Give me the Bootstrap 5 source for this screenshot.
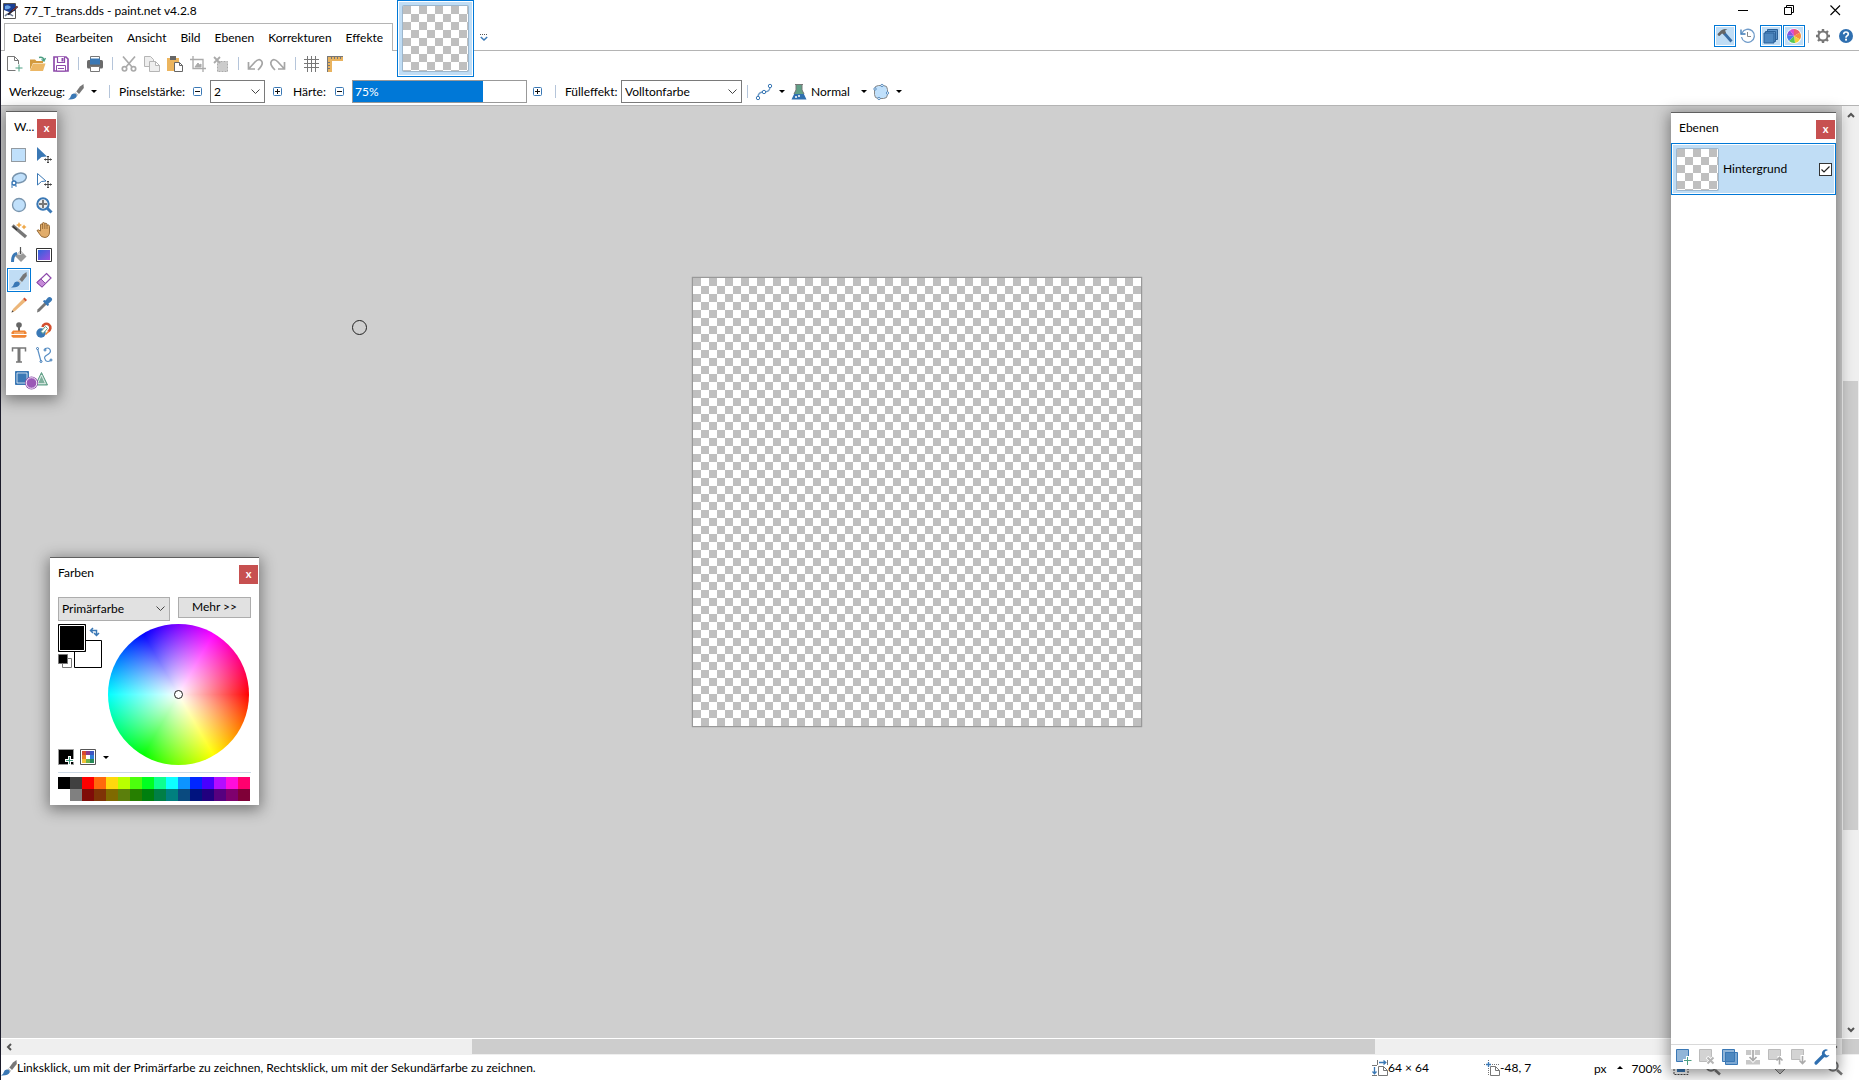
<!DOCTYPE html>
<html lang="de">
<head>
<meta charset="utf-8">
<meta name="viewport" content="width=device-width, initial-scale=1">
<title>77_T_trans.dds - paint.net v4.2.8</title>
<link href="https://cdn.jsdelivr.net/npm/bootstrap@5.3.0/dist/css/bootstrap.min.css" rel="stylesheet">
<style>
:root{--edge:#b4b4b4;--accent:#0078d7;--pick:#c0ddf5}
body{font:12px/16px Lato,"Open Sans",sans-serif;color:#000;background:#fff;border-left:1px solid #1b1b2a}
button,input,select{font:inherit;color:inherit}
svg{display:block;overflow:visible;flex:none}
.ico{width:16px;height:16px}
.plain{border:0;background:none;padding:0}
.gap-l6{margin-left:6px}
.gap-l7{margin-left:7px}
.gap-l11{margin-left:11px}
.titlerow{height:23px;padding:0 0 2px 2px;gap:5px}
.winbtns{gap:35px;padding-right:18px}
.winbtns svg{width:11px;height:11px}
.menurow{height:28px}
.menurow::before{content:"";width:3px;border-bottom:1px solid var(--edge)}
.menubox{border:1px solid var(--edge);border-bottom:0;padding:1px 8px 0;gap:14px;width:389px}
.menubox a{color:#000;text-decoration:none}
.menurest{border-bottom:1px solid var(--edge);padding-right:1px}
.docthumb{left:396px;top:0;width:77px;height:77px;border:1px solid var(--accent);background:var(--pick);box-shadow:inset 0 0 0 1px #fff;z-index:3}
.checker{background:repeating-conic-gradient(#fff 0 25%,#bfbfbf 0 50%) 0 0/16px 16px}
.docthumb .checker{width:65px;height:65px;box-shadow:0 0 0 1px #9db7cd;border-radius:1px}
.overflowbtn{left:479px;top:33px}
.aux{width:23px;height:23px}
.aux .face{width:22px;height:22px;margin-top:2px;border:1px solid transparent}
.aux.on .face{border-color:var(--accent);background:var(--pick);box-shadow:inset 0 0 0 1px #fff}
.toolrow{height:27px;padding:0 0 2px 3px}
.slot{width:23px;height:23px;padding-left:3px}
.sep{width:11px;height:13px}
.sep::before{content:"";display:block;margin-left:5px;width:1px;height:13px;background:#b5c5da}
.menurest .sep{width:6px;margin-top:7px}
.menurest .sep::before{margin-left:2px}
.optrow{height:28px;padding-left:8px;border-bottom:1px solid var(--edge)}
.step{width:9px;height:9px}
.box{border:1px solid #7a7a7a;height:23px;border-radius:0;appearance:none;padding:0 20px 0 3px;line-height:18px;background:#fff url("data:image/svg+xml,%3Csvg xmlns='http://www.w3.org/2000/svg' width='9' height='6'%3E%3Cpath d='M.5.5 4.500 4.500 8.500.5' fill='none' stroke='%23444'/%3E%3C/svg%3E") no-repeat right 4px center}
.w-lbl1{width:55px}.w-lbl2{width:67px}.w-lbl3{width:34px}.w-lbl4{width:56px}.w-num{width:55px}.w-fill{width:121px}.w-mode{width:50px}
.hard{width:175px;height:23px}
.hard input{width:100%;height:100%;appearance:none;margin:0;border:1px solid #999;background:linear-gradient(90deg,var(--accent) 75%,#fff 75%)}
.hard input::-webkit-slider-thumb{appearance:none;width:0}
.hard output{left:3px;top:4px;color:#fff;pointer-events:none}
.caret{width:0;height:0;border:3px solid transparent;border-top-color:#000;border-bottom:0}
.caret.up{border:3px solid transparent;border-bottom-color:#000;border-top:0}
.work{background:#cfcfcf;z-index:2}
.view{padding:171px 10px 0 0}
.sheet{width:450px;height:450px;border:1px solid #999;box-shadow:0 0 1px #888}
.bar{background:#efefef}
.bar .thumb{background:#cdcdcd}
.vbar{width:17px;padding-right:1px;border-left:1px solid #f5f5f5}
.hbar{height:17px;border-top:1px solid #fff;padding-bottom:1px}
.arrowbox{width:15px;height:17px}
.hbar .arrowbox{height:15px}
.corner{width:17px;background:#cdcdcd}
.status{height:25px}
.stright{right:0;top:0;height:25px;width:491px}
.stzoom{padding-top:2px}
.w-dim{width:96px}.w-pos{width:94px}.w-pct{width:38px}
.panel{background:#fff;border-top:1px solid #606060;box-shadow:0 3px 14px 2px rgba(0,0,0,.42);z-index:4}
.shut{width:19px;height:19px;background:#c75050;color:#fff;border:0;padding:0 0 2px;font-weight:700;font-size:11px;line-height:16px}
.p-tools{left:5px;top:5px;width:51px;height:284px}
.p-tools .head{padding:7px 1px 0 8px}
.toolgrid{display:grid;grid-template-columns:25px 25px;grid-auto-rows:25px;padding:5px 0 0 1px}
.toolgrid .plain{width:24px;height:24px;border:1px solid transparent}
.toolgrid .plain.on{border-color:var(--accent);background:var(--pick);box-shadow:inset 0 0 0 1px #fff}
.toolgrid .wide{grid-column:span 2;width:48px}
.p-colors{left:49px;top:451px;width:209px;height:248px}
.p-colors .head{padding:7px 1px 0 8px}
.p-colors .inner{padding:13px 8px 0}
.p-colors .sel{border-color:#adadad;background-color:#e1e1e1;width:112px;height:24px}
.more{width:73px;height:21px;border:1px solid #adadad;background:#e1e1e1;line-height:14px;padding:0 0 2px}
.wheel{width:141px;height:141px;flex:none;border-radius:50%;background:radial-gradient(closest-side,#fff,rgba(255,255,255,0)),conic-gradient(from 90deg,red,#ff0,#0f0,#0ff,#00f,#f0f,red)}
.wheelrow{padding:3px 2px 0 0;height:144px}
.swatches{width:50px}
.ruleline{height:1px;background:#ccd9e6;margin-top:7px}
.palette{display:grid;grid-template-columns:repeat(16,12px);grid-auto-rows:12px;margin-top:4px}
.p-layers{right:23px;top:6px;bottom:-31px;width:165px}
.p-layers .head{padding:7px 1px 0 8px;height:30px}
.layer{height:52px;border:1px solid var(--accent);background:var(--pick);box-shadow:inset 0 0 0 1px #fff;padding:0 3px 0 5px;gap:5px}
.layer .checker{width:41px;height:41px;box-shadow:0 0 0 1px #9db7cd;border-radius:1px}
.tick{appearance:none;width:13px;height:13px;border:1px solid #333;background:#fff url("data:image/svg+xml,%3Csvg xmlns='http://www.w3.org/2000/svg' width='11' height='11'%3E%3Cpath d='M1.500 5.500 4 8 9.500 2.500' fill='none' stroke='%23222' stroke-width='1.200'/%3E%3C/svg%3E")}
.layerbar{height:25px;border-top:1px solid #d9d9d9;padding:0 6px 0 5px}
.cursor{left:350px;top:213px}
</style>
<script src="https://cdn.jsdelivr.net/npm/bootstrap@5.3.0/dist/js/bootstrap.bundle.min.js"></script>
</head>
<body class="d-flex flex-column vh-100 overflow-hidden m-0">

<svg class="d-none">
<symbol id="brush" viewBox="0 0 16 16"><path d="M15.500 0 15.800 4 11 10 8.300 7.500 12 2.500Z" fill="#777"/><path d="M7.500 8.200 10.300 10.700 9.200 12 6.200 9.300Z" fill="#c4c4c4"/><path d="M5.800 9.500Q9 9.800 8.800 12.300 7 16 0 15.500 2.500 14.500 2.800 12 3.300 9.700 5.800 9.500Z" fill="#3a78b5"/></symbol>
<symbol id="minus" viewBox="0 0 9 9"><rect x=".5" y=".5" width="8" height="8" rx="1" fill="#fff" stroke="#3a78b5"/><path d="M2 4.500H7" stroke="#111"/></symbol>
<symbol id="plus" viewBox="0 0 9 9"><rect x=".5" y=".5" width="8" height="8" rx="1" fill="#fff" stroke="#3a78b5"/><path d="M2 4.500H7M4.500 2V7" stroke="#111"/></symbol>
<symbol id="lens" viewBox="0 0 16 16"><circle cx="6" cy="6" r="4.700" fill="#e8f2fb" stroke="#777" stroke-width="2"/><path d="M10 10 15 14.500" stroke="#777" stroke-width="2.600"/></symbol>
</svg>

<header class="position-relative">
  <div class="titlerow d-flex align-items-center">
    <svg class="ico" viewBox="0 0 16 16"><path d="M.5.500H12.500V15.500H.5Z" fill="#fff" stroke="#555"/><path d="M1 1H12V8L6 9 1 7Z" fill="#1b3f94"/><path d="M2 3Q5 1 8 4 6 7 2 6Z" fill="#69a3e6"/><path d="M2 13Q5 9 10 13" fill="none" stroke="#6a7a94" stroke-width="1.500"/><path d="M14.500 3.500 5 11.500" stroke="#2a2130" stroke-width="1.800"/><path d="M14.500 3.500 9.500 7.500" stroke="#b0443c"/></svg>
    <span>77_T_trans.dds - paint.net v4.2.8</span>
    <div class="winbtns d-flex ms-auto">
      <button class="plain" aria-label="Minimieren"><svg viewBox="0 0 11 11"><path d="M0 5.500H10" stroke="#000"/></svg></button>
      <button class="plain" aria-label="Verkleinern"><svg viewBox="0 0 11 11"><path d="M.5 2.500H7.500V9.500H.5ZM2.500 2.500V.5H9.500V7.500H7.500" fill="none" stroke="#000"/></svg></button>
      <button class="plain" aria-label="Schließen"><svg viewBox="0 0 11 11"><path d="M.5.500 10 10M10 .5.500 10" stroke="#000" stroke-width="1.100"/></svg></button>
    </div>
  </div>
  <div class="menurow d-flex">
    <nav class="menubox d-flex align-items-center">
      <a href="#">Datei</a><a href="#">Bearbeiten</a><a href="#">Ansicht</a><a href="#">Bild</a><a href="#">Ebenen</a><a href="#">Korrekturen</a><a href="#">Effekte</a>
    </nav>
    <div class="menurest flex-grow-1 d-flex justify-content-end align-items-start">
      <button class="plain aux on" aria-label="Werkzeuge"><span class="face d-flex align-items-center justify-content-center"><svg class="ico" viewBox="0 0 16 16"><path d="M7 5 14.500 13.500" stroke="#3a6ea5" stroke-width="2.800"/><path d="M1 7.500 0.500 6 4 2.500Q7 0 10.500 1.500L8 2.500 9 4.500 7 6.500 5 5.500 2.500 8Z" fill="#666"/></svg></span></button>
      <button class="plain aux" aria-label="Verlauf"><span class="face d-flex align-items-center justify-content-center"><svg class="ico" viewBox="0 0 16 16"><path d="M2 5A6.500 6.500 0 1 1 1.500 9" fill="none" stroke="#6f9bc9" stroke-width="1.300"/><path d="M1 1.500V6H5.500" fill="none" stroke="#3a78b5" stroke-width="1.300"/><path d="M7.500 4V8.500H11" fill="none" stroke="#888"/></svg></span></button>
      <button class="plain aux on" aria-label="Ebenen"><span class="face d-flex align-items-center justify-content-center"><svg class="ico" viewBox="0 0 16 16" fill="#5b93c9" stroke="#2b6199"><path d="M4.500 1.500H14.500V11.500H4.500Z"/><path d="M2.500 3.500H12.500V13.500H2.500Z"/><path d="M1 5H11V15H1Z" fill="#4e88c0"/></svg></span></button>
      <button class="plain aux on" aria-label="Farben"><span class="face d-flex align-items-center justify-content-center"><svg class="ico" viewBox="-8 -8 16 16"><circle r="7.800" fill="#fff"/><path d="M0 0V-7A7 7 0 0 1 6-3.500Z" fill="#ef5d6c"/><path d="M0 0 6-3.500A7 7 0 0 1 6 3.500Z" fill="#f5913d"/><path d="M0 0 6 3.500A7 7 0 0 1 1 7Z" fill="#f3d23c"/><path d="M0 0 1 7A7 7 0 0 1-5 5Z" fill="#55c956"/><path d="M0 0-5 5A7 7 0 0 1-7-1Z" fill="#4a7de8"/><path d="M0 0-7-1A7 7 0 0 1-4-5.700Z" fill="#8a54dd"/><path d="M0 0-4-5.700A7 7 0 0 1 0-7Z" fill="#e04ac8"/></svg></span></button>
      <span class="sep"></span>
      <button class="plain aux" aria-label="Einstellungen"><span class="face d-flex align-items-center justify-content-center"><svg class="ico" viewBox="-8 -8 16 16"><circle r="4.500" fill="none" stroke="#777" stroke-width="2"/><g stroke="#777" stroke-width="2.400"><path d="M0-4.500V-7M0 4.500V7M-4.500 0H-7M4.500 0H7M-3.500-3.500-5-5M3.500 3.500 5 5M3.500-3.500 5-5M-3.500 3.500-5 5"/></g></svg></span></button>
      <button class="plain aux" aria-label="Hilfe"><span class="face d-flex align-items-center justify-content-center"><svg class="ico" viewBox="0 0 16 16"><circle cx="8" cy="8" r="7" fill="#2f6fb0"/><path d="M5.700 6.200Q5.800 4 8 4T10.300 6Q10.300 7.300 8.900 8 8 8.500 8 9.700" fill="none" stroke="#fff" stroke-width="1.700"/><rect x="7.100" y="10.700" width="1.900" height="1.900" fill="#fff"/></svg></span></button>
    </div>
  </div>
  <button class="docthumb position-absolute d-flex align-items-center justify-content-center p-0" aria-label="77_T_trans.dds"><span class="checker"></span></button>
  <button class="plain overflowbtn position-absolute" aria-label="Bilderliste"><svg width="8" height="9" viewBox="0 0 8 9"><path d="M0 1.500H8" stroke="#555" stroke-dasharray="1 1"/><path d="M.8 4 4 7 7.200 4" fill="none" stroke="#3a78b5" stroke-width="1.500"/></svg></button>

  <div class="toolrow d-flex align-items-center">
    <button class="plain slot" aria-label="Neu"><svg class="ico" viewBox="0 0 16 16"><path d="M8.500 14.500H.5V.5H7.500L11.500 4.500V8M7.500.5V4.500H11.500" fill="none" stroke="#777"/><path d="M12 8.500V15.500M8.500 12H15.500" stroke="#4c9f83"/></svg></button>
    <button class="plain slot" aria-label="Öffnen"><svg class="ico" viewBox="0 0 16 16"><path d="M0 3.500H5L6.500 5H13V7H3L0 14Z" fill="#d39a3e"/><path d="M3 7.500H15.500L13 15H0Z" fill="#ecb765"/><path d="M9 1.500Q13 .5 14 4M11.500 3.500 14 5 15.500 2" fill="none" stroke="#4c9f83" stroke-width="1.300"/></svg></button>
    <button class="plain slot" aria-label="Speichern"><svg class="ico" viewBox="0 0 16 16"><path d="M1 1H13L15 3V15H1Z" fill="#fff" stroke="#8e4bab" stroke-width="1.700"/><path d="M4.500 1V6.500H11.500V1" fill="#fff" stroke="#8e4bab" stroke-width="1.200"/><path d="M8.500 2H10.500V5.500H8.500Z" fill="#8e4bab"/><path d="M3.500 9.500H12.500V15H3.500Z" fill="#fff" stroke="#8e4bab"/><path d="M5 12.500H11" stroke="#8e4bab"/></svg></button>
    <span class="sep"></span>
    <button class="plain slot" aria-label="Drucken"><svg class="ico" viewBox="0 0 16 16"><path d="M3.500.500H12.500V5H3.500Z" fill="#fff" stroke="#777"/><rect y="4" width="16" height="8.500" rx="1.500" fill="#6b6b6b"/><path d="M3 2.500H13V8.500H3Z" fill="#3a78b5"/><path d="M3.500 10.500H12.500V15.500H3.500Z" fill="#fff" stroke="#777"/></svg></button>
    <span class="sep"></span>
    <button class="plain slot" aria-label="Ausschneiden"><svg class="ico" viewBox="0 0 16 16" fill="none" stroke="#aaa" stroke-width="1.700"><path d="M2 .5 11 11M14 .5 5 11"/><circle cx="3.500" cy="12.800" r="2.200"/><circle cx="12.500" cy="12.800" r="2.200"/></svg></button>
    <button class="plain slot" aria-label="Kopieren"><svg class="ico" viewBox="0 0 16 16" fill="#eee" stroke="#b5b5b5"><path d="M.5.500H6.500L9.500 3.500V10.500H.5Z"/><path d="M5.500 5.500H11.500L15.500 9.500V15.500H5.500ZM11.500 5.500V9.500H15.500"/></svg></button>
    <button class="plain slot" aria-label="Einfügen"><svg class="ico" viewBox="0 0 16 16"><path d="M0 2H12V15H0Z" fill="#ecb55e"/><path d="M3 0H9V4H3Z" fill="#666"/><path d="M7.500 6.500H12.500L15.500 9.500V15.500H7.500ZM12.500 6.500V9.500H15.500" fill="#fff" stroke="#666"/></svg></button>
    <button class="plain slot" aria-label="Zuschneiden"><svg class="ico" viewBox="0 0 16 16" fill="none" stroke="#aaa"><path d="M3 0V12.500H16M0 3.500H13V16" stroke-width="1.300"/><path d="M5 11 8 7 9.500 9 11 8V11Z" fill="#aaa"/></svg></button>
    <button class="plain slot" aria-label="Auswahl aufheben"><svg class="ico" viewBox="0 0 16 16"><path d="M4.500 5.500H14.500V15.500H4.500Z" fill="#ccc" stroke="#aaa" stroke-dasharray="2 1"/><path d="M1 1 7 7M7 1 1 7" stroke="#aaa" stroke-width="1.800"/></svg></button>
    <span class="sep"></span>
    <button class="plain slot" aria-label="Rückgängig"><svg class="ico" viewBox="0 0 16 16" fill="none" stroke="#a5a5a5" stroke-width="1.700"><path d="M1.500 6V13H8M2 12.500 8 6Q12 2 14.500 5T11 14"/></svg></button>
    <button class="plain slot" aria-label="Wiederherstellen"><svg class="ico" viewBox="0 0 16 16" fill="none" stroke="#a5a5a5" stroke-width="1.700"><path d="M14.500 6V13H8M14 12.500 8 6Q4 2 1.500 5T5 14"/></svg></button>
    <span class="sep"></span>
    <button class="plain slot" aria-label="Gitter"><svg class="ico" viewBox="0 0 16 16" stroke="#777"><path d="M3.500 0V16M7.500 0V16M11.500 0V16M0 3.500H15M0 7.500H15M0 11.500H15"/></svg></button>
    <button class="plain slot" aria-label="Lineale"><svg class="ico" viewBox="0 0 16 16"><path d="M0 0H16V5H5V16H0Z" fill="#e9b35f"/><path d="M0 .5H16M.5 0V16" stroke="#777"/><path d="M4.500 1V3M7.500 1V3M10.500 1V3M13.500 1V3M1 6.500H3M1 9.500H3M1 12.500H3" stroke="#777"/></svg></button>
  </div>

  <div class="optrow d-flex align-items-center">
    <span class="w-lbl1 text-nowrap">Werkzeug:</span>
    <button class="plain d-flex align-items-center ms-1" aria-label="Werkzeug wählen"><svg class="ico"><use href="#brush"/></svg><span class="caret gap-l7"></span></button>
    <span class="sep gap-l7"></span>
    <label class="w-lbl2 text-nowrap ms-1" for="size">Pinselstärke:</label>
    <button class="plain gap-l7" aria-label="Dünner"><svg class="step"><use href="#minus"/></svg></button>
    <select id="size" class="box w-num ms-2"><option>2</option></select>
    <button class="plain ms-2" aria-label="Dicker"><svg class="step"><use href="#plus"/></svg></button>
    <label class="w-lbl3 text-nowrap gap-l11" for="hard">Härte:</label>
    <button class="plain ms-2" aria-label="Weicher"><svg class="step"><use href="#minus"/></svg></button>
    <div class="hard position-relative ms-2"><input id="hard" type="range" min="0" max="100" value="75"><output class="position-absolute" for="hard">75%</output></div>
    <button class="plain gap-l6" aria-label="Härter"><svg class="step"><use href="#plus"/></svg></button>
    <span class="sep ms-2"></span>
    <label class="w-lbl4 text-nowrap ms-1" for="fill">Fülleffekt:</label>
    <select id="fill" class="box w-fill"><option>Volltonfarbe</option></select>
    <span class="sep"></span>
    <button class="plain d-flex align-items-center ms-1" aria-label="Glättung"><svg class="ico" viewBox="0 0 16 16" fill="#fff" stroke="#3a78b5"><path d="M1 13Q1 8 7 8T13 3" fill="none" stroke="#6c9ac6" stroke-width="1.400"/><circle cx="1" cy="14" r="1.700"/><circle cx="7" cy="8" r="1.700"/><circle cx="13" cy="2" r="1.700"/></svg><span class="caret gap-l6"></span></button>
    <button class="plain d-flex align-items-center gap-l6" aria-label="Mischmodus"><svg class="ico" viewBox="0 0 16 16"><path d="M5 1H11V6L15.500 15.500H.5L5 6Z" fill="#2f6fb0"/><path d="M5 1H11V6L13 10H3L5 6Z" fill="#5f9f86"/><path d="M4 .5H12M5 1V6L3 10M11 1V6L13 10" fill="none" stroke="#777"/><circle cx="5" cy="13" r="1" fill="#fff"/><circle cx="8" cy="12" r="1" fill="#fff"/></svg><span class="w-mode text-start ms-1">Normal</span><span class="caret"></span></button>
    <button class="plain d-flex align-items-center gap-l6" aria-label="Kantenglättung"><svg class="ico" viewBox="0 0 16 16"><rect x="1.500" y="1.500" width="13" height="13" rx="4" fill="#c0e0fb" stroke="#888"/><g fill="#fff" stroke="#3a78b5" stroke-width=".8"><circle cx="9" cy="1.500" r="1.200"/><circle cx="2" cy="5" r="1.200"/><circle cx="14.500" cy="9" r="1.200"/><circle cx="6" cy="14.500" r="1.200"/></g></svg><span class="caret gap-l7"></span></button>
  </div>
</header>

<main class="work position-relative flex-grow-1 d-flex">
  <div class="view flex-grow-1 d-flex justify-content-center align-items-start"><div class="sheet checker"></div></div>
  <div class="bar vbar d-flex flex-column align-items-stretch">
    <span class="arrowbox d-flex align-items-center justify-content-center"><svg width="8" height="6"><path d="M1 5 4 2 7 5" fill="none" stroke="#555" stroke-width="2"/></svg></span>
    <span style="flex:258"></span><span class="thumb" style="flex:449"></span><span style="flex:191"></span>
    <span class="arrowbox d-flex align-items-center justify-content-center"><svg width="8" height="6"><path d="M1 1 4 4 7 1" fill="none" stroke="#555" stroke-width="2"/></svg></span>
  </div>
  <svg class="cursor position-absolute" width="16" height="16"><circle cx="8.500" cy="8.500" r="7" fill="none" stroke="#222"/></svg>

  <section class="panel p-tools position-absolute">
    <div class="head d-flex justify-content-between"><span>W...</span><button class="shut" aria-label="Schließen">x</button></div>
    <div class="toolgrid">
      <button class="plain d-flex align-items-center justify-content-center" aria-label="Rechteckauswahl"><svg class="ico" viewBox="0 0 16 16"><path d="M.5 1.500H14.500V14.500H.5Z" fill="#c0e0fb" stroke="#444" stroke-dasharray="1 1"/></svg></button>
      <button class="plain d-flex align-items-center justify-content-center" aria-label="Verschieben"><svg class="ico" viewBox="0 0 16 16"><path d="M1 0 11 9.500 5.500 10 1 14Z" fill="#3a78b5"/><path d="M12 9V16M8.500 12.500H15.500M11 10 12 9 13 10M11 15 12 16 13 15M9.500 11.500 8.500 12.500 9.500 13.500M14.500 11.500 15.500 12.500 14.500 13.500" fill="none" stroke="#444"/></svg></button>
      <button class="plain d-flex align-items-center justify-content-center" aria-label="Lasso"><svg class="ico" viewBox="0 0 16 16"><ellipse cx="8.500" cy="6" rx="7" ry="4.700" transform="rotate(-15 8.500 6)" fill="#c0e0fb" stroke="#7894ad" stroke-width="1.500"/><circle cx="3" cy="11" r="2" fill="#fff" stroke="#3a78b5" stroke-width="1.400"/><path d="M1 16V12M2 13H5V15" fill="none" stroke="#3a78b5"/></svg></button>
      <button class="plain d-flex align-items-center justify-content-center" aria-label="Auswahl verschieben"><svg class="ico" viewBox="0 0 16 16"><path d="M1.500 1.500 10 9 5.500 9.500 1.500 13Z" fill="#fff" stroke="#3a78b5"/><path d="M12 9V16M8.500 12.500H15.500M11 10 12 9 13 10M11 15 12 16 13 15M9.500 11.500 8.500 12.500 9.500 13.500M14.500 11.500 15.500 12.500 14.500 13.500" fill="none" stroke="#444"/></svg></button>
      <button class="plain d-flex align-items-center justify-content-center" aria-label="Ellipsenauswahl"><svg class="ico" viewBox="0 0 16 16"><circle cx="8" cy="8" r="6.500" fill="#c0e0fb" stroke="#7894ad" stroke-width="1.300"/></svg></button>
      <button class="plain d-flex align-items-center justify-content-center" aria-label="Zoom"><svg class="ico" viewBox="0 0 16 16"><circle cx="7" cy="7" r="5.700" fill="#eee" stroke="#3a78b5" stroke-width="2"/><path d="M11 11 15.500 15.500" stroke="#3a78b5" stroke-width="3"/><path d="M7 3V11M3 7H11" stroke="#777" stroke-width="2"/></svg></button>
      <button class="plain d-flex align-items-center justify-content-center" aria-label="Zauberstab"><svg class="ico" viewBox="0 0 16 16"><path d="M1.500 3.500 15 15" stroke="#777" stroke-width="3.400"/><path d="M2 4.500 6 8" stroke="#333" stroke-width="1.500"/><path d="M8 0 9 2 11 3 9 4 8 6 7 4 5 3 7 2ZM13 2.500 14 4 15.500 5 14 6 13 7.500 12 6 10.500 5 12 4Z" fill="#efa94a"/></svg></button>
      <button class="plain d-flex align-items-center justify-content-center" aria-label="Hand"><svg class="ico" viewBox="0 0 16 16"><path d="M4.500 8V3Q4.500 2 5.500 2T6.500 3V1.500Q6.500.500 7.500.500T8.700 1.500V2Q9 1 10 1.200T11 2.500V3.500Q11.500 2.700 12.500 3T13.500 4.500V10Q13.500 15 9 15.500 5 15.500 3.500 12L1 8.500Q2 7 4.500 9Z" fill="#e2ad6b" stroke="#8d6230" stroke-width=".9"/><path d="M6.600 3V7M8.800 2V7M11 3V7" stroke="#8d6230" stroke-width=".8"/></svg></button>
      <button class="plain d-flex align-items-center justify-content-center" aria-label="Füllen"><svg class="ico" viewBox="0 0 16 16"><path d="M9.500 3.500 15.500 9.500 10 15 4 9Z" fill="#999"/><path d="M6 7.500 9.500 4 12 6.500 9 8Z" fill="#ddd"/><path d="M9.500 0V7" stroke="#555" stroke-width="1.200"/><path d="M6 6.500Q1.500 7 1.500 15" fill="none" stroke="#3a78b5" stroke-width="3"/></svg></button>
      <button class="plain d-flex align-items-center justify-content-center" aria-label="Farbverlauf"><svg class="ico" viewBox="0 0 16 16"><defs><linearGradient id="gr" x2="1" y2="1"><stop stop-color="#2d63dc"/><stop offset="1" stop-color="#9d4fe0"/></linearGradient></defs><path d="M.5 1.500H15.500V14.500H.5Z" fill="#fff" stroke="#333"/><path d="M2 3H14V13H2Z" fill="url(#gr)"/></svg></button>
      <button class="plain on d-flex align-items-center justify-content-center" aria-label="Pinsel"><svg class="ico"><use href="#brush"/></svg></button>
      <button class="plain d-flex align-items-center justify-content-center" aria-label="Radierer"><svg class="ico" viewBox="0 0 16 16"><path d="M10.500 1.500 15 6 6 15 1 10.500Z" fill="#fff" stroke="#8e4bab" stroke-width="1.200"/><path d="M5 7 9.500 11.500 6 15 1 10.500Z" fill="#c58ad8" stroke="#8e4bab"/></svg></button>
      <button class="plain d-flex align-items-center justify-content-center" aria-label="Stift"><svg class="ico" viewBox="0 0 16 16"><path d="M12 2 14.500 4.500 4 14 .5 15.500 2 12Z" fill="#ecb679"/><path d="M.5 15.500 1.300 13.300 2.700 14.700Z" fill="#444"/><path d="M12 2 13.500.5 16 3 14.500 4.500Z" fill="#d3502f"/></svg></button>
      <button class="plain d-flex align-items-center justify-content-center" aria-label="Pipette"><svg class="ico" viewBox="0 0 16 16"><path d="M9 5 11 7 3.500 14.500 1 15.500 1.500 12.500Z" fill="#777"/><path d="M8 3 9.500 3.500 12 .5Q14-.5 15.500 1T15 4.500L12.500 6.500 13 8 11.500 9 7 4.500Z" fill="#3a78b5"/></svg></button>
      <button class="plain d-flex align-items-center justify-content-center" aria-label="Klonstempel"><svg class="ico" viewBox="0 0 16 16"><circle cx="8" cy="3" r="2.800" fill="#666"/><path d="M7 5H9V9H7Z" fill="#666"/><path d="M2 8.500H14L15.500 10.500V12H.5V10.500Z" fill="#ef8433"/><path d="M.5 13H15.500V14.500L14 15.800H2L.5 14.500Z" fill="#ef8433"/><path d="M3 11H13" stroke="#f9cfa5"/></svg></button>
      <button class="plain d-flex align-items-center justify-content-center" aria-label="Umfärben"><svg class="ico" viewBox="0 0 16 16"><circle cx="5" cy="11" r="4.700" fill="#3a78b5"/><path d="M6.500 5A4 4 0 1 1 12 9.500" fill="none" stroke="#d3502f" stroke-width="2.600"/><path d="M5 9.500 9.500 4.500 11.500 6.500 7 11.500Z" fill="#fff" stroke="#5f9f86"/><path d="M9.500 12.500 13 9" stroke="#ef8433" stroke-width="1.500"/></svg></button>
      <button class="plain d-flex align-items-center justify-content-center" aria-label="Text"><svg class="ico" viewBox="0 0 16 16"><path d="M1.500 4.500V1H14.500V4.500M8 1V15M5 15H11" fill="none" stroke="#777" stroke-width="1.500"/><path d="M8 1V15" stroke="#777" stroke-width="3"/></svg></button>
      <button class="plain d-flex align-items-center justify-content-center" aria-label="Linie/Kurve"><svg class="ico" viewBox="0 0 16 16" fill="none" stroke="#3a78b5"><path d="M1.500 1.500 5 14.500M8.500 3Q9 1 11.500 1T14.500 4Q14.500 6 11 8T9 12Q9.500 14.500 12 14.500T15 12" stroke="#5b90c5" stroke-width="1.200"/><g fill="#fff"><circle cx="1.500" cy="1.500" r="1"/><circle cx="5" cy="14.500" r="1"/><circle cx="9" cy="3" r="1"/><circle cx="15" cy="13" r="1"/></g></svg></button>
      <button class="plain wide d-flex align-items-center justify-content-center" aria-label="Formen"><svg width="36" height="18" viewBox="0 0 36 18"><path d="M2.500.5H15.500V13.500H2.500Z" fill="#3a78b5" stroke="#3a78b5"/><path d="M4 2H14V12H4Z" fill="none" stroke="#fff" stroke-width=".7"/><path d="M28.500 1.500 34.500 14H22.500Z" fill="#7fb19d" stroke="#5f9f86"/><path d="M28.500 4 32.500 12.700H24.500Z" fill="none" stroke="#fff" stroke-width=".8"/><circle cx="18.500" cy="12" r="6.500" fill="#8e4bab"/><circle cx="18.500" cy="12" r="5.300" fill="#9b59b6" stroke="#fff" stroke-width=".9"/></svg></button>
    </div>
  </section>

  <section class="panel p-colors position-absolute">
    <div class="head d-flex justify-content-between"><span>Farben</span><button class="shut" aria-label="Schließen">x</button></div>
    <div class="inner">
      <div class="d-flex justify-content-between align-items-start">
        <select class="box sel" aria-label="Aktive Farbe"><option>Primärfarbe</option></select>
        <button class="more">Mehr &gt;&gt;</button>
      </div>
      <div class="wheelrow d-flex">
        <div class="swatches d-flex flex-column justify-content-between">
          <svg width="45" height="45" viewBox="0 0 45 45"><path d="M16.500 16.500H43.500V43.500H16.500Z" fill="#fff" stroke="#000"/><path d="M.5.500H27.500V27.500H.5Z" fill="#000" stroke="#000"/><path d="M1.500 1.500H26.500V26.500H1.500Z" fill="none" stroke="#fff"/><path d="M4.500 34.500H13.500V43.500H4.500Z" fill="#fff" stroke="#777"/><path d="M.5 30.500H9.500V39.500H.5Z" fill="#000" stroke="#777"/><path d="M33 6.500H38.500V11M35 4 32.500 6.500 35 9M36 9 38.500 11.500 41 9" fill="none" stroke="#3a78b5" stroke-width="1.500"/></svg>
          <div class="d-flex align-items-center">
            <button class="plain" aria-label="Farbe hinzufügen"><svg class="ico" viewBox="0 0 16 16"><path d="M.5.500H15.500V15.500H.5Z" fill="#000" stroke="#999"/><path d="M11.500 7V16M7 11.500H16" stroke="#fff" stroke-width="3"/><path d="M11.500 8V15M8 11.500H15" stroke="#4c9f83"/></svg></button>
            <button class="plain d-flex align-items-center gap-l6" aria-label="Paletten"><svg class="ico" viewBox="0 0 16 16"><path d="M.5.500H15.500V15.500H.5Z" fill="#fff" stroke="#555"/><path d="M2 2H6V6H2Z" fill="#d9492f"/><path d="M6 2H10V6H6Z" fill="#8e3b8a"/><path d="M10 2H14V6H10Z" fill="#3d55c0"/><path d="M2 6H6V10H2Z" fill="#e98028"/><path d="M10 6H14V10H10Z" fill="#2e80d8"/><path d="M2 10H6V14H2Z" fill="#f0c33a"/><path d="M6 10H10V14H6Z" fill="#6db24a"/><path d="M10 10H14V14H10Z" fill="#278a58"/></svg><span class="caret gap-l7"></span></button>
          </div>
        </div>
        <div class="wheel d-flex align-items-center justify-content-center"><svg width="9" height="9"><circle cx="4.500" cy="4.500" r="4" fill="#fff" stroke="#222"/></svg></div>
      </div>
      <div class="ruleline"></div>
      <div class="palette" id="palette"></div>
    </div>
  </section>

  <section class="panel p-layers position-absolute d-flex flex-column">
    <div class="head d-flex justify-content-between"><span>Ebenen</span><button class="shut" aria-label="Schließen">x</button></div>
    <div class="layer d-flex align-items-center"><span class="checker"></span><label class="flex-grow-1" for="vis">Hintergrund</label><input class="tick" type="checkbox" id="vis" checked></div>
    <div class="layerbar mt-auto d-flex align-items-center justify-content-between">
      <button class="plain" aria-label="Neue Ebene"><svg class="ico" viewBox="0 0 16 16"><path d="M.5.500H12.500V12.500H.5Z" fill="#91b5d8" stroke="#3a78b5"/><path d="M11.500 7V16M7 11.500H16" stroke="#fff" stroke-width="3"/><path d="M11.500 8V16M8 11.500H15.500" stroke="#4c9f83"/></svg></button>
      <button class="plain" aria-label="Ebene löschen"><svg class="ico" viewBox="0 0 16 16"><path d="M.5.500H12.500V12.500H.5Z" fill="#d3d3d3" stroke="#bbb"/><path d="M8 8 15 15M15 8 8 15" stroke="#fff" stroke-width="3.500"/><path d="M8.500 8.500 14.500 14.500M14.500 8.500 8.500 14.500" stroke="#b5b5b5" stroke-width="2"/></svg></button>
      <button class="plain" aria-label="Ebene duplizieren"><svg class="ico" viewBox="0 0 16 16" fill="#91b5d8" stroke="#3a78b5"><path d="M.5.500H12.500V12.500H.5Z"/><path d="M3.500 3.500H15.500V15.500H3.500Z" fill="#7ba7d2"/><path d="M3.500 3.500H12.500V12.500H3.500Z" fill="#4e88c0"/></svg></button>
      <button class="plain" aria-label="Ebene zusammenführen"><svg class="ico" viewBox="0 0 16 16"><path d="M1 1H15V6H1ZM1 11H15V15.500H1Z" fill="#c8c8c8"/><path d="M8 0V11M4.500 8 8 11.500 11.500 8" fill="none" stroke="#fff" stroke-width="3.500"/><path d="M8 1V11M4.500 8 8 11.500 11.500 8" fill="none" stroke="#aaa" stroke-width="1.700"/></svg></button>
      <button class="plain" aria-label="Ebene nach oben"><svg class="ico" viewBox="0 0 16 16"><path d="M.5.500H12.500V10.500H.5Z" fill="#d3d3d3" stroke="#bbb"/><path d="M11.500 16V7" stroke="#fff" stroke-width="4"/><path d="M11.500 15.500V8.500M8.500 11.500 11.500 8.500 14.500 11.500" fill="none" stroke="#aaa" stroke-width="1.600"/></svg></button>
      <button class="plain" aria-label="Ebene nach unten"><svg class="ico" viewBox="0 0 16 16"><path d="M.5.500H12.500V10.500H.5Z" fill="#d3d3d3" stroke="#bbb"/><path d="M11.500 16V6" stroke="#fff" stroke-width="4"/><path d="M11.500 7V14.500M8.500 11.500 11.500 14.500 14.500 11.500" fill="none" stroke="#aaa" stroke-width="1.600"/></svg></button>
      <button class="plain" aria-label="Eigenschaften"><svg class="ico" viewBox="0 0 16 16"><path d="M2 14 10 6" stroke="#2f6fb0" stroke-width="3.200" stroke-linecap="round"/><path d="M14 1A4 4 0 1 0 15.500 6L13 6.500 10.500 5 11 2.500Z" fill="#2f6fb0"/></svg></button>
    </div>
  </section>
</main>

<div class="bar hbar d-flex">
  <span class="arrowbox d-flex align-items-center justify-content-center"><svg width="6" height="8"><path d="M5 1 2 4 5 7" fill="none" stroke="#555" stroke-width="2"/></svg></span>
  <span style="flex:456"></span><span class="thumb" style="flex:903"></span><span style="flex:452"></span>
  <span class="arrowbox d-flex align-items-center justify-content-center"><svg width="6" height="8"><path d="M1 1 4 4 1 7" fill="none" stroke="#555" stroke-width="2"/></svg></span>
  <span class="corner"></span>
</div>
<footer class="status position-relative d-flex align-items-center">
  <svg class="ico"><use href="#brush"/></svg><span>Linksklick, um mit der Primärfarbe zu zeichnen, Rechtsklick, um mit der Sekundärfarbe zu zeichnen.</span>
  <div class="stright position-absolute d-flex align-items-center">
    <svg class="ico ms-1" viewBox="0 0 16 16"><path d="M6.500 6.500H11.500L15.500 10.500V15.500H6.500ZM11.500 6.500V10.500H15.500M5.500 0V5M15.500 0V5M0 5.500H5M0 15.500H5" fill="#fff" stroke="#777"/><path d="M7 2.500H14M11.500.5 13.800 2.500 11.500 4.500M2.500 7V14M.5 11.500 2.500 13.800 4.500 11.500" fill="none" stroke="#3a78b5" stroke-width="1.300"/></svg>
    <span class="w-dim">64 × 64</span>
    <svg class="ico" viewBox="0 0 16 16"><path d="M0 4.500H16M4.500 0V16" stroke="#777" stroke-dasharray="1 1"/><path d="M2 4.500H7M4.500 2V7" stroke="#3a78b5" stroke-width="1.300"/><path d="M6.500 6.500H11.500L15.500 10.500V15.500H6.500ZM11.500 6.500V10.500H15.500" fill="#fff" stroke="#777"/></svg>
    <span class="w-pos">-48, 7</span>
    <span class="stzoom">px</span><span class="caret up gap-l11"></span><span class="stzoom w-pct ms-2">700%</span>
    <svg class="ico ms-1" viewBox="0 0 16 16"><path d="M1 1H15V14.500H1Z" fill="#fff" stroke="#444" stroke-dasharray="2 1"/><path d="M4 3H12V12H4Z" fill="#3a78b5"/></svg>
    <svg class="ico ms-3"><use href="#lens"/></svg>
    <svg class="mx-auto" width="30" height="16"><path d="M2.500 0V9" stroke="#777"/><path d="M16 2H26V9L21 14 16 9Z" fill="#ccc" stroke="#777"/></svg>
    <svg class="ico me-3"><use href="#lens"/></svg>
  </div>
</footer>

<script>
const rows = [
  ["#000","#404040","#ff0000","#ff6a0d","#ffd80d","#b9ff00","#4cff0d","#00ff21","#0dff90","#0dffff","#0d94ff","#0026ff","#4800ff","#b40dff","#ff0ddc","#ff006e"],
  ["#fff","#808080","#7f0c08","#7f3306","#7f6a00","#5b7f0c","#267f00","#007f0e","#007f46","#007f7f","#0a4a7f","#00137f","#21007f","#57007f","#7f006e","#7f0037"]
];
document.getElementById("palette").innerHTML = rows.flat().map(c => `<span style="background:${c}"></span>`).join("");
</script>
</body>
</html>
